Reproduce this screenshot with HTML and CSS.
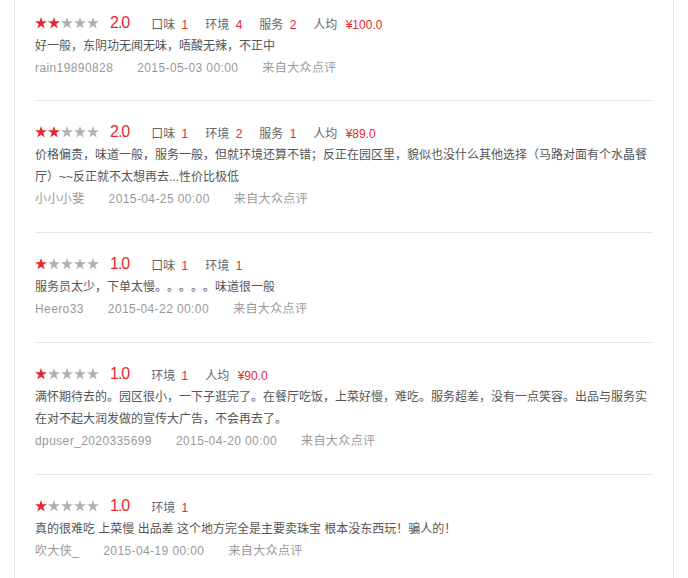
FILE: index.html
```html
<!DOCTYPE html>
<html lang="zh-CN">
<head>
  <meta charset="UTF-8">
  <meta name="viewport" content="width=device-width, initial-scale=1.0">
  <title>点评</title>
  <link rel="stylesheet" href="styles.css">
</head>
<body>
  <div class="review-panel">

    <div class="review">
      <div class="review-head">
        <span class="stars"><i class="star on"></i><i class="star on"></i><i class="star"></i><i class="star"></i><i class="star"></i></span>
        <span class="score">2.0</span>
        <span class="item">口味 <em>1</em></span>
        <span class="item">环境 <em>4</em></span>
        <span class="item">服务 <em>2</em></span>
        <span class="item">人均 <em class="price">¥100.0</em></span>
      </div>
      <p class="review-text">好一般，东阴功无闻无味，唔酸无辣，不正中</p>
      <div class="review-meta"><span>rain19890828</span><span>2015-05-03 00:00</span><span>来自大众点评</span></div>
    </div>

    <div class="review">
      <div class="review-head">
        <span class="stars"><i class="star on"></i><i class="star on"></i><i class="star"></i><i class="star"></i><i class="star"></i></span>
        <span class="score">2.0</span>
        <span class="item">口味 <em>1</em></span>
        <span class="item">环境 <em>2</em></span>
        <span class="item">服务 <em>1</em></span>
        <span class="item">人均 <em class="price">¥89.0</em></span>
      </div>
      <p class="review-text">价格偏贵，味道一般，服务一般，但就环境还算不错；反正在园区里，貌似也没什么其他选择（马路对面有个水晶餐厅）~~反正就不太想再去...性价比极低</p>
      <div class="review-meta"><span>小小小斐</span><span>2015-04-25 00:00</span><span>来自大众点评</span></div>
    </div>

    <div class="review">
      <div class="review-head">
        <span class="stars"><i class="star on"></i><i class="star"></i><i class="star"></i><i class="star"></i><i class="star"></i></span>
        <span class="score">1.0</span>
        <span class="item">口味 <em>1</em></span>
        <span class="item">环境 <em>1</em></span>
      </div>
      <p class="review-text">服务员太少，下单太慢。。。。。味道很一般</p>
      <div class="review-meta"><span>Heero33</span><span>2015-04-22 00:00</span><span>来自大众点评</span></div>
    </div>

    <div class="review">
      <div class="review-head">
        <span class="stars"><i class="star on"></i><i class="star"></i><i class="star"></i><i class="star"></i><i class="star"></i></span>
        <span class="score">1.0</span>
        <span class="item">环境 <em>1</em></span>
        <span class="item">人均 <em class="price">¥90.0</em></span>
      </div>
      <p class="review-text">满怀期待去的。园区很小，一下子逛完了。在餐厅吃饭，上菜好慢，难吃。服务超差，没有一点笑容。出品与服务实在对不起大润发做的宣传大广告，不会再去了。</p>
      <div class="review-meta"><span>dpuser_2020335699</span><span>2015-04-20 00:00</span><span>来自大众点评</span></div>
    </div>

    <div class="review">
      <div class="review-head">
        <span class="stars"><i class="star on"></i><i class="star"></i><i class="star"></i><i class="star"></i><i class="star"></i></span>
        <span class="score">1.0</span>
        <span class="item">环境 <em>1</em></span>
      </div>
      <p class="review-text">真的很难吃 上菜慢 出品差 这个地方完全是主要卖珠宝 根本没东西玩！骗人的！</p>
      <div class="review-meta"><span>吹大侠_</span><span>2015-04-19 00:00</span><span>来自大众点评</span></div>
    </div>

  </div>
</body>
</html>
```

FILE: styles.css
```css
/* General Styles */
body {
  margin: 0;
  padding: 0;
  background-color: #fff;
  font-family: "Liberation Sans", "Noto Sans CJK SC", sans-serif;
  font-size: 12px;
  color: #555;
  text-spacing-trim: space-all;
}

.review-panel {
  box-sizing: border-box;
  width: 660px;
  min-height: 100vh;
  margin-left: 14px;
  padding: 0 20px;
  border-left: 1px solid #e6e6e6;
  border-right: 1px solid #e6e6e6;
}

/* Single review */
.review {
  padding: 20px 0 21px;
  border-bottom: 1px solid #e6e6e6;
}

.review:first-child {
  padding: 12px 0 20px;
}

.review:last-child {
  border-bottom: none;
}

.review-head {
  display: flex;
  align-items: center;
  height: 22px;
  margin-bottom: 1px;
}

.stars {
  display: flex;
  margin-right: 10px;
}

.star {
  display: block;
  width: 12px;
  height: 12px;
  margin-right: 1px;
  background-color: #b0b0b0;
  clip-path: polygon(50% 0%, 62% 36%, 100% 36%, 69% 58%, 81% 95%, 50% 72%, 19% 95%, 31% 58%, 0% 36%, 38% 36%);
}

.star.on {
  background-color: #e8282b;
}

.score {
  font-size: 16px;
  letter-spacing: -1px;
  color: #e8282b;
  margin-right: 22px;
}

.item {
  font-size: 12px;
  color: #666;
  margin-right: 17px;
}

.item em {
  font-style: normal;
  color: #e8282b;
  margin-left: 3px;
}

.item em.price {
  margin-left: 5px;
}

.review-text {
  margin: 0;
  line-height: 22px;
  color: #555;
}

.review-meta {
  line-height: 23px;
  letter-spacing: 0.4px;
  color: #999;
}

.review-meta span {
  margin-right: 24px;
}
```
